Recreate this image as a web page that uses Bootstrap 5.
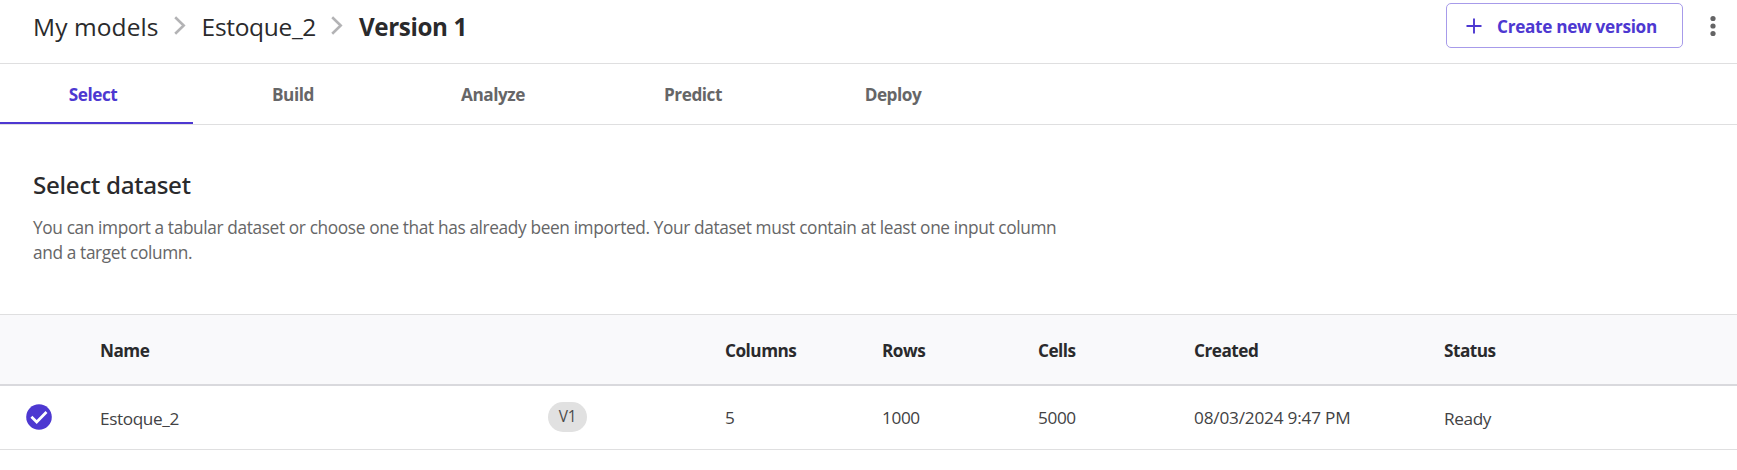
<!DOCTYPE html>
<html lang="en">
<head>
<meta charset="utf-8">
<meta name="viewport" content="width=device-width, initial-scale=1">
<title>Estoque_2 - Version 1</title>
<link href="https://cdn.jsdelivr.net/npm/bootstrap@5.3.0/dist/css/bootstrap.min.css" rel="stylesheet">
<style>
  :root { --brand: #4d38d1; --line: #dfdfe0; --ink: #2a2a2c; --soft: #666667; }
  body { font-family: "Open Sans", "Noto Sans", sans-serif; color: var(--ink); background: #fff; overflow: hidden; }
  .top-bar { height: 64px; border-bottom: 1px solid var(--line); padding: 3px 18px 0 33px; }
  .crumbs { font-size: 24.5px; line-height: 48px; letter-spacing: .1px; }
  .crumbs .sep { width: 12px; height: 19px; margin: 0 16px 3px 15px; flex: none; }
  .crumb-dataset { letter-spacing: -.32px; }
  .crumb-current { font-size: 24.2px; font-weight: 700; letter-spacing: -.38px; }
  .btn-create { width: 237px; height: 45px; margin-right: 24px; padding: 0 0 0 19px; border: 1px solid #a79bea; border-radius: 5px; color: var(--brand); font-size: 17.2px; font-weight: 700; letter-spacing: -.31px; }
  .btn-create span { padding-top: 2px; }
  .btn-create svg { margin-right: 15px; }
  .steps { height: 61px; border-bottom: 1px solid var(--line); }
  .steps .nav-link { width: 200px; height: 60px; padding: 0 14px 0 0; line-height: 62px; text-align: center; color: var(--soft); font-size: 17.2px; font-weight: 700; letter-spacing: -.45px; }
  .steps .nav-link.active { color: var(--brand); background: linear-gradient(var(--brand), var(--brand)) 0 58px / 193px 2px no-repeat; }
  .intro { height: 189px; padding: 42px 33px 0; }
  .intro h1 { font-family: "Noto Sans", sans-serif; font-size: 24.2px; font-weight: 500; line-height: 36px; letter-spacing: -.3px; margin-bottom: 12px; }
  .intro p { width: 1045px; font-size: 17.3px; line-height: 25px; letter-spacing: -.375px; color: var(--soft); }
  .datasets { table-layout: fixed; --bs-table-bg: transparent; color: var(--ink); }
  .datasets th, .datasets td { padding: 0; vertical-align: middle; border: 0; white-space: nowrap; }
  .datasets thead tr { height: 70px; background: #f9f9fb; border-top: 1px solid var(--line); border-bottom: 2px solid #d9d9dd; }
  .datasets th { font-size: 17.2px; font-weight: 700; letter-spacing: -.5px; padding-top: 3px; }
  .datasets tbody tr { height: 65px; border-bottom: 1px solid var(--line); }
  .datasets td { font-size: 17.2px; letter-spacing: -.38px; color: #424244; padding-top: 1px; }
  .datasets .created { letter-spacing: -.19px; }
  .datasets td.nudge { padding-top: 3px; }
  .datasets td.marker { padding: 0 0 1px; }
  .row-check { margin-left: 26px; }
  .version-pill { width: 39px; height: 30px; background: #e1e1e1; color: #4c4c4c; font-size: 15.5px; letter-spacing: -.3px; }
</style>
</head>
<body>
<header class="top-bar d-flex align-items-start">
  <nav class="crumbs d-flex align-items-center me-auto">
    <span>My models</span>
    <svg class="sep" viewBox="0 0 12 19" fill="none" stroke="#b3b3b5" stroke-width="2.6"><path d="M1.2 1.2 9.7 9.5 1.2 17.8"/></svg>
    <span class="crumb-dataset">Estoque_2</span>
    <svg class="sep" viewBox="0 0 12 19" fill="none" stroke="#b3b3b5" stroke-width="2.6"><path d="M1.2 1.2 9.7 9.5 1.2 17.8"/></svg>
    <span class="crumb-current">Version 1</span>
  </nav>
  <button class="btn btn-create d-flex align-items-center" type="button">
    <svg width="16" height="16" viewBox="0 0 16 16" stroke="#4d38d1" stroke-width="1.9"><path d="M.5 8h15M8 .5v15"/></svg>
    <span>Create new version</span>
  </button>
  <svg width="12" height="46" viewBox="0 0 12 46" fill="#646465"><circle cx="6" cy="15.5" r="2.6"/><circle cx="6" cy="23" r="2.6"/><circle cx="6" cy="30.5" r="2.6"/></svg>
</header>
<nav class="nav steps flex-nowrap">
  <a class="nav-link active" href="#">Select</a>
  <a class="nav-link" href="#">Build</a>
  <a class="nav-link" href="#">Analyze</a>
  <a class="nav-link" href="#">Predict</a>
  <a class="nav-link" href="#">Deploy</a>
</nav>
<main>
  <section class="intro">
    <h1>Select dataset</h1>
    <p class="mb-0">You can import a tabular dataset or choose one that has already been imported. Your dataset must contain at least one input column and a target column.</p>
  </section>
  <table class="table datasets mb-0">
    <colgroup><col style="width:100px"><col style="width:448px"><col style="width:177px"><col style="width:157px"><col style="width:156px"><col style="width:156px"><col style="width:250px"><col></colgroup>
    <thead>
      <tr><th></th><th>Name</th><th></th><th>Columns</th><th>Rows</th><th>Cells</th><th>Created</th><th>Status</th></tr>
    </thead>
    <tbody>
      <tr>
        <td class="marker"><svg class="row-check d-block" width="26" height="26" viewBox="0 0 26 26"><circle cx="13" cy="13" r="12.8" fill="#4d38d1"/><path d="m5.4 12.7 5.3 5.3 9.8-10" fill="none" stroke="#fff" stroke-width="2.7"/></svg></td>
        <td class="nudge">Estoque_2</td>
        <td class="marker"><span class="version-pill rounded-pill d-flex align-items-center justify-content-center">V1</span></td>
        <td>5</td><td>1000</td><td>5000</td>
        <td class="created">08/03/2024 9:47 PM</td>
        <td class="nudge">Ready</td>
      </tr>
    </tbody>
  </table>
</main>
<script src="https://cdn.jsdelivr.net/npm/bootstrap@5.3.0/dist/js/bootstrap.bundle.min.js"></script>
</body>
</html>
